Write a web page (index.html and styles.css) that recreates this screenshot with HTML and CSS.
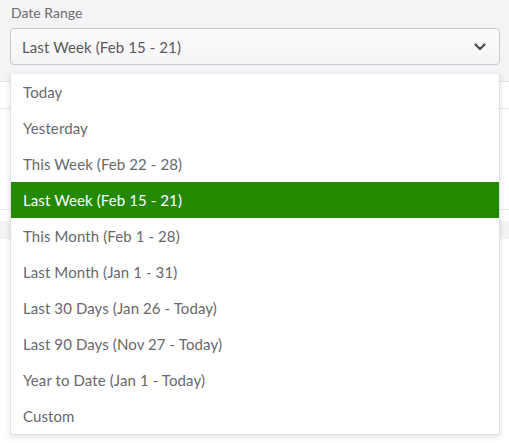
FILE: index.html
```html
<!DOCTYPE html>
<html>
<head>
<meta charset="utf-8">
<link rel="stylesheet" href="styles.css">
</head>
<body>
<div class="page">
  <div class="filter-bar">
    <div class="field-label">Date Range</div>
    <div class="select">
      <span class="select-value">Last Week (Feb 15 - 21)</span>
      <svg class="chevron" width="12" height="8" viewBox="0 0 12 8"><path d="M1.5 1.5 L6 6 L10.5 1.5" fill="none" stroke="#4a4a4f" stroke-width="2.2" stroke-linecap="round" stroke-linejoin="round"/></svg>
    </div>
  </div>
  <div class="bg-row first"></div>
  <div class="bg-row second"></div>
  <div class="bg-band"></div>

  <ul class="menu">
    <li class="item">Today</li>
    <li class="item">Yesterday</li>
    <li class="item">This Week (Feb 22 - 28)</li>
    <li class="item selected">Last Week (Feb 15 - 21)</li>
    <li class="item">This Month (Feb 1 - 28)</li>
    <li class="item">Last Month (Jan 1 - 31)</li>
    <li class="item">Last 30 Days (Jan 26 - Today)</li>
    <li class="item">Last 90 Days (Nov 27 - Today)</li>
    <li class="item">Year to Date (Jan 1 - Today)</li>
    <li class="item">Custom</li>
  </ul>
</div>
</body>
</html>
```
FILE: styles.css
```css
* { box-sizing: border-box; }
html, body {
  margin: 0;
  padding: 0;
  background: #ffffff;
  font-family: Lato, "Open Sans", sans-serif;
}
.page {
  position: relative;
  width: 509px;
  height: 443px;
  overflow: hidden;
}
.filter-bar {
  background: #f4f4f6;
  height: 82px;
  padding: 4px 9px 0 10px;
  border-bottom: 1px solid #e6e6e9;
}
.field-label {
  font-size: 14px;
  line-height: 18px;
  color: #6b6b70;
  padding-left: 1px;
  margin-bottom: 6px;
}
.select {
  height: 37px;
  border: 1px solid #c9c9ce;
  border-radius: 4px;
  background: linear-gradient(#fbfbfc, #f5f5f7);
  display: flex;
  align-items: center;
  justify-content: space-between;
  padding: 0 13px 0 11px;
}
.select-value {
  font-size: 15px;
  letter-spacing: 0.1px;
  color: #58585d;
}
.chevron { display: block; }
.bg-row {
  height: 27px;
  border-bottom: 1px solid #e6e6e9;
}
.bg-row.second {
  height: 101px;
}
.bg-band {
  margin-top: 11px;
  height: 18px;
  background: #f4f4f6;
}
.menu {
  position: absolute;
  left: 10px;
  top: 74px;
  width: 490px;
  margin: 0;
  padding: 0;
  list-style: none;
  background: #ffffff;
  border: 1px solid #e0e0e3;
  border-top: 0;
  box-shadow: 0 2px 6px rgba(0, 0, 0, 0.12);
}
.item {
  height: 36px;
  display: flex;
  align-items: center;
  padding-left: 12px;
  font-size: 15px;
  letter-spacing: 0.1px;
  color: #68686d;
}
.item.selected {
  background: #238900;
  color: #ffffff;
}
```
